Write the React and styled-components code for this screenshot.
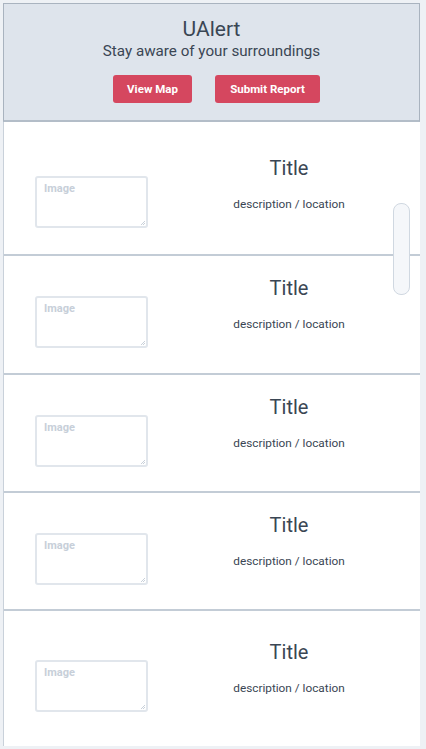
import React from "react";
import styled, { createGlobalStyle } from "styled-components";

const Global = createGlobalStyle`
  html, body { margin: 0; padding: 0; background: #eef1f5; }
  body { font-family: Roboto, "Noto Sans", sans-serif; color: #3a4654; }
  * { box-sizing: border-box; }
`;

const Page = styled.div`
  padding: 3px 6px 4px 3px;
  width: 426px;
`;

const Panel = styled.div`
  position: relative;
  background: #ffffff;
  border-left: 1px solid #c9d1da;
`;

const Header = styled.header`
  background: #dee4ec;
  border: 1px solid #a9b3bf;
  border-bottom: 2px solid #b3bdc8;
  height: 119px;
  margin-left: -1px;
  display: flex;
  flex-direction: column;
  align-items: center;
  padding-top: 13px;
`;

const AppTitle = styled.h1`
  margin: 0;
  font-size: 21px;
  font-weight: 400;
  line-height: 24px;
  color: #3a4654;
`;

const Tagline = styled.p`
  margin: 0;
  font-size: 15.2px;
  line-height: 20px;
  color: #3a4654;
`;

const ButtonRow = styled.div`
  display: flex;
  gap: 23px;
  margin-top: 14px;
  padding-left: 10px;
`;

const Button = styled.button`
  height: 28px;
  width: ${(p) => p.$w}px;
  background: #d5475f;
  color: #fff;
  border: none;
  border-radius: 3px;
  font-family: Roboto, sans-serif;
  font-weight: 700;
  font-size: 11.5px;
  padding: 0;
`;

const Row = styled.div`
  height: ${(p) => p.$h}px;
  border-bottom: ${(p) => (p.$last ? "none" : "2px solid #c3ccd6")};
  display: grid;
  grid-template-columns: 208px 154px;
  padding-top: ${(p) => p.$top}px;
  align-items: start;
`;

const ImageBox = styled.textarea`
  margin: 19px 0 0 31px;
  width: 113px;
  height: 52px;
  border: 2px solid #e1e6ec;
  border-radius: 3px;
  padding: 4px 7px;
  font-family: Roboto, sans-serif;
  font-size: 11px;
  font-weight: 700;
  resize: none;
  color: #3a4654;
  outline: none;
  background:
    linear-gradient(135deg, transparent 0 70%, #c9d1da 70% 76%, transparent 76% 84%, #c9d1da 84% 90%, transparent 90%) no-repeat right 1px bottom 1px / 7px 7px,
    #fff;
  &::placeholder { color: #c7cfd9; }
`;

const TextCol = styled.div`
  display: flex;
  flex-direction: column;
  align-items: center;
`;

const ItemTitle = styled.div`
  font-size: 20px;
  line-height: 22px;
  color: #3a4654;
`;

const ItemDesc = styled.div`
  margin-top: 18px;
  font-size: 11.8px;
  line-height: 14px;
  color: #3a4654;
`;

const ScrollThumb = styled.div`
  position: absolute;
  left: 389px;
  top: 200px;
  width: 17px;
  height: 92px;
  border-radius: 8px;
  background: #f5f7fa;
  border: 1.5px solid #d0d8e1;
`;

const rows = [
  { h: 134, top: 35 },
  { h: 119, top: 21 },
  { h: 118, top: 21 },
  { h: 118, top: 21 },
  { h: 135, top: 30, last: true },
];

export default function App() {
  return (
    <>
      <Global />
      <Page>
        <Panel>
          <Header>
            <AppTitle>UAlert</AppTitle>
            <Tagline>Stay aware of your surroundings</Tagline>
            <ButtonRow>
              <Button $w={79}>View Map</Button>
              <Button $w={105}>Submit Report</Button>
            </ButtonRow>
          </Header>
          {rows.map((r, i) => (
            <Row key={i} $h={r.h} $top={r.top} $last={r.last}>
              <ImageBox placeholder="Image" />
              <TextCol>
                <ItemTitle>Title</ItemTitle>
                <ItemDesc>description / location</ItemDesc>
              </TextCol>
            </Row>
          ))}
          <ScrollThumb />
        </Panel>
      </Page>
    </>
  );
}
